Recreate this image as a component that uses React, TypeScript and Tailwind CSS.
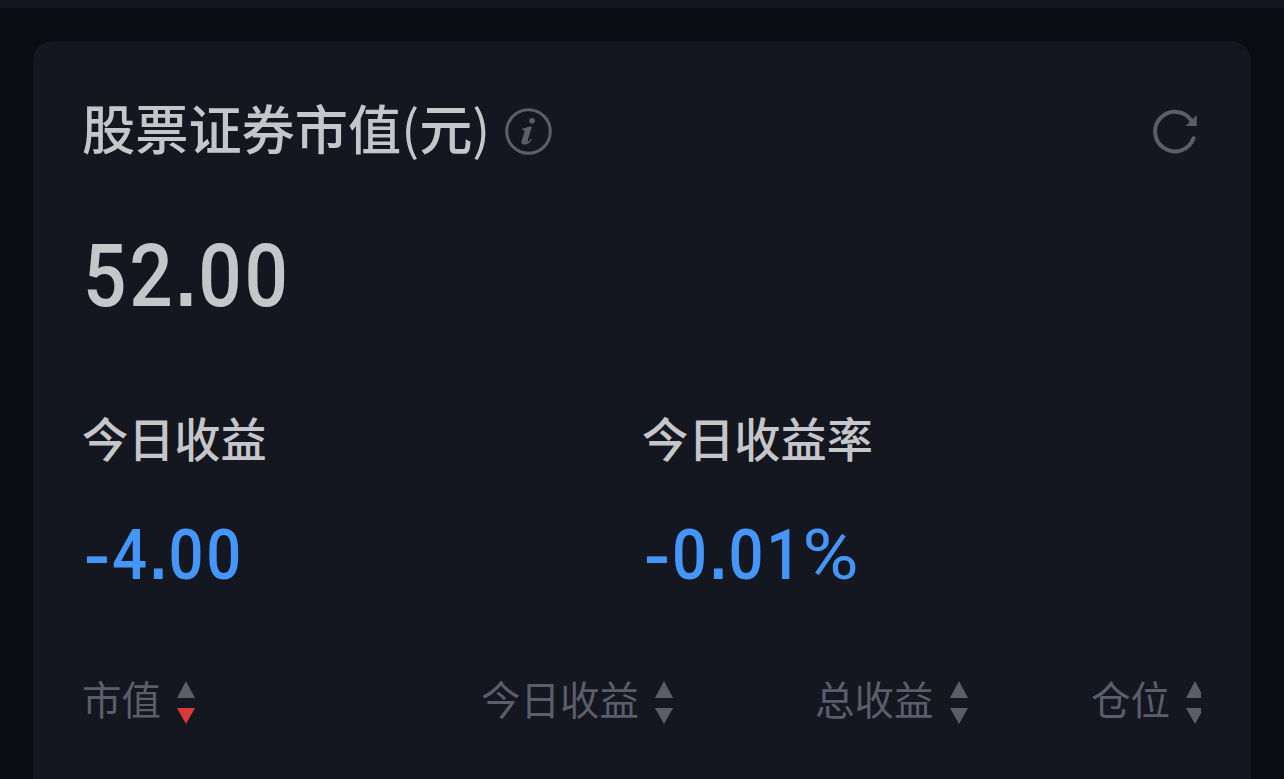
import clsx from "clsx";

type SortDirection = "asc" | "desc" | null;

const columns: { label: string; sort: SortDirection }[] = [
  { label: "市值", sort: "desc" },
  { label: "今日收益", sort: null },
  { label: "总收益", sort: null },
  { label: "仓位", sort: null },
];

const stats = [
  { label: "今日收益", value: "-4.00" },
  { label: "今日收益率", value: "-0.01%" },
];

const InfoIcon = () => (
  <svg width="48" height="48" viewBox="0 0 48 48" fill="none" className="shrink-0 text-[#5c5d6b]">
    <circle cx="24.5" cy="24.5" r="21.8" stroke="currentColor" strokeWidth="3" />
    <circle cx="28" cy="13.8" r="2.8" fill="currentColor" />
    <path
      d="M18.2 21.8 Q22 21.3 24 19.8 L28 19.8 L23.8 33 Q23.4 35 24.6 34.3 Q25.7 33.7 27 31.8 L27.9 32.5 Q24.7 37.5 20.8 37.5 Q16.6 37.5 17.6 33.9 L20.7 24.3 Q21.1 23 18 23 Z"
      fill="currentColor"
    />
  </svg>
);

const RefreshIcon = () => (
  <svg width="46" height="46" viewBox="0 0 46 46" fill="none" className="shrink-0 text-[#5c5d6b]">
    <path
      d="M41.6 30.2 A19.8 19.8 0 1 1 40 13.5"
      stroke="currentColor"
      strokeWidth="4"
      strokeLinecap="round"
    />
    <path d="M44.7 7 V18 H33.6 Z" fill="currentColor" />
  </svg>
);

const SortIcon = ({ direction }: { direction: SortDirection }) => (
  <svg width="18" height="43" viewBox="0 0 18 43" className="shrink-0 fill-[#5c5d6b]">
    <path d="M9 0 L18 17 H0 Z" className={clsx(direction === "asc" && "fill-[#db3838]")} />
    <path d="M0 27 H18 L9 43 Z" className={clsx(direction === "desc" && "fill-[#db3838]")} />
  </svg>
);

// square dot, long minus and wide percent sign around narrow digits
const glyphStyles: Record<string, string> = {
  ".": "font-['Liberation_Sans',sans-serif] font-bold tracking-[2px]",
  "-": "inline-block w-[33px] translate-y-[2px] origin-left scale-x-[1.25] pl-px",
  "%": "-ml-[2px] inline-block origin-left scale-x-[1.25] font-normal",
};

const Figure = ({ value, className }: { value: string; className: string }) => (
  <p className={clsx("origin-left scale-x-[0.88] font-[Roboto,sans-serif] font-medium tracking-[3px] whitespace-nowrap", className)}>
    {value.split("").map((char, i) => (
      <span key={i} className={glyphStyles[char]}>
        {char}
      </span>
    ))}
  </p>
);

const App: React.FC = () => {
  return (
    <div className="flex h-screen flex-col overflow-hidden bg-[#0b0b14] font-['Noto_Sans_CJK_SC',sans-serif] text-[#c5c6ca]">
      <div className="h-2 shrink-0 bg-[#14171f]" />

      <main className="mx-[33px] mt-[33px] flex grow flex-col overflow-hidden rounded-t-[20px] bg-[#14171f] px-[50px] pt-[50px]">
        <header className="flex h-20 items-center justify-between">
          <div className="flex items-center">
            <h1 className="-ml-px mb-[9px] w-[422px] text-[53.2px] leading-[71px] font-medium whitespace-nowrap">
              股票证券市值<span className="font-normal">(</span>元<span className="font-normal">)</span>
            </h1>
            <InfoIcon />
          </div>
          <button className="mr-[3px]">
            <RefreshIcon />
          </button>
        </header>

        <Figure value="52.00" className="mt-[55px] h-[100px] text-[87px] leading-[100px]" />

        <section className="mt-[76px] grid grid-cols-[560px_1fr]">
          {stats.map(({ label, value }) => (
            <div key={label}>
              <h2 className="-ml-px h-[70px] text-[46.2px] leading-[70px] font-medium whitespace-nowrap">{label}</h2>
              <Figure value={value} className="mt-[43px] h-20 text-[70px] leading-[80px] text-[#4497f8]" />
            </div>
          ))}
        </section>

        <div className="mt-[77px] grid h-[60px] grid-cols-[399px_334px_276px_1fr]">
          {columns.map(({ label, sort }) => (
            <div key={label} className="flex min-w-0 items-center gap-4">
              <span className="-ml-px mb-[9px] shrink-0 text-[39.5px] leading-[51px] whitespace-nowrap text-[#5c5d6b]">
                {label}
              </span>
              <div className="min-w-0 overflow-hidden">
                <SortIcon direction={sort} />
              </div>
            </div>
          ))}
        </div>
      </main>
    </div>
  );
};

export default App;
